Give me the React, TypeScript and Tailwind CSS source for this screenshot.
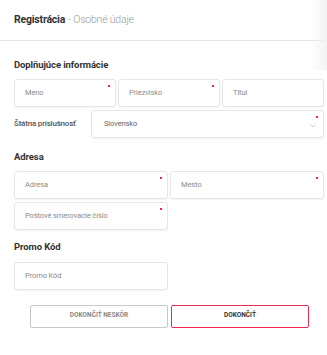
import React from "react";

function Dot() {
  return (
    <span className="absolute right-[5px] top-[5px] h-[2px] w-[2px] bg-[#ff1a50]" />
  );
}

function Field({
  label,
  required,
  className = "",
}: {
  label: string;
  required?: boolean;
  className?: string;
}) {
  return (
    <div
      className={`relative flex h-[28px] items-center rounded-[3px] border border-[#e6e6e6] bg-white pl-[10px] shadow-[0_1px_2px_rgba(0,0,0,0.05)] ${className}`}
    >
      <span className="text-[7.5px] tracking-[-0.1px] text-[#8a8a8a]">{label}</span>
      {required && <Dot />}
    </div>
  );
}

function SectionTitle({ children }: { children: React.ReactNode }) {
  return (
    <h3 className="text-[9.5px] font-bold leading-none tracking-[-0.1px] text-[#333]">
      {children}
    </h3>
  );
}

export default function App() {
  return (
    <div
      className="relative h-[355px] w-[327px] overflow-hidden bg-white"
      style={{ fontFamily: "Roboto, 'Liberation Sans', sans-serif" }}
    >
      {/* right edge shadow */}
      <div className="pointer-events-none absolute right-0 top-0 h-[70px] w-[16px] bg-gradient-to-r from-transparent to-[#f2f2f2]" />

      {/* Header */}
      <div className="flex h-[41px] items-center border-b border-[#e4e4e4] pl-[14px]">
        <span className="text-[10.5px] font-bold tracking-[-0.2px] text-[#333]">Registrácia</span>
        <span className="ml-[3px] text-[10.5px] font-light tracking-[-0.2px] text-[#999]">
          - Osobné údaje
        </span>
      </div>

      <div className="px-[14px] pr-[3px]">
        {/* Doplňujúce informácie */}
        <div className="pt-[19px]">
          <SectionTitle>Doplňujúce informácie</SectionTitle>
        </div>
        <div className="mt-[9px] grid grid-cols-3 gap-x-[2px]">
          <Field label="Meno" required />
          <Field label="Priezvisko" required />
          <Field label="Titul" />
        </div>
        <div className="mt-[3px] flex items-center">
          <span className="w-[77px] text-[8px] font-medium tracking-[-0.2px] text-[#555]">
            Štátna príslušnosť
          </span>
          <div className="relative flex h-[28px] flex-1 items-center rounded-[3px] border border-[#e6e6e6] pl-[12px] shadow-[0_1px_2px_rgba(0,0,0,0.05)]">
            <span className="text-[7.5px] tracking-[-0.1px] text-[#666]">Slovensko</span>
            <Dot />
            <svg
              className="absolute right-[7px] top-[13px]"
              width="6"
              height="4"
              viewBox="0 0 6 4"
              fill="none"
            >
              <path d="M0.5 0.5L3 3L5.5 0.5" stroke="#bbb" strokeWidth="0.8" />
            </svg>
          </div>
        </div>

        {/* Adresa */}
        <div className="pt-[14px]">
          <SectionTitle>Adresa</SectionTitle>
        </div>
        <div className="mt-[10px] grid grid-cols-2 gap-x-[2px] gap-y-[3px]">
          <Field label="Adresa" required />
          <Field label="Mesto" required />
          <Field label="Poštové smerovacie číslo" required />
        </div>

        {/* Promo */}
        <div className="pt-[12px]">
          <SectionTitle>Promo Kód</SectionTitle>
        </div>
        <div className="mt-[10px] grid grid-cols-2 gap-x-[2px]">
          <Field label="Promo Kód" />
        </div>
      </div>

      {/* Buttons */}
      <div className="mt-[15px] flex gap-[3px] pl-[30px]">
        <button className="h-[23px] w-[138px] rounded-[2px] border border-[#c8c8c8] text-[6.5px] font-bold uppercase text-[#888]">
          Dokončiť neskôr
        </button>
        <button className="h-[23px] w-[138px] rounded-[2px] border-[1.5px] border-[#ea2a55] text-[6.5px] font-bold uppercase text-[#333]">
          Dokončiť
        </button>
      </div>
    </div>
  );
}
